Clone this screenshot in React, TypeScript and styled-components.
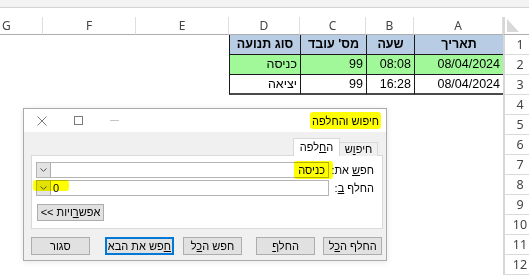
import React from 'react';
import styled, { createGlobalStyle } from 'styled-components';

const GlobalStyle = createGlobalStyle`
  html, body {
    margin: 0;
    padding: 0;
    background: #fff;
  }
  body {
    font-family: "Liberation Sans", Arial, sans-serif;
    overflow: hidden;
  }
`;

const Screen = styled.div`
  position: relative;
  width: 529px;
  height: 275px;
  overflow: hidden;
  background: #fff;
`;

const TopBand = styled.div`
  height: 7px;
  background: #f3f3f3;
  border-bottom: 1px solid #d4d4d4;
  margin-bottom: 9px;
`;

const Sheet = styled.div`
  display: grid;
  grid-template-columns: 43px 93px 93px 71px 66px 48px 89px 26px;
  grid-template-rows: 18px repeat(12, 20px);
`;

const ColHead = styled.div<{ $edge?: boolean }>`
  box-sizing: border-box;
  display: flex;
  align-items: center;
  justify-content: ${(p) => (p.$edge ? 'flex-start' : 'center')};
  padding-left: ${(p) => (p.$edge ? '2px' : '0')};
  border-right: 1px solid #dedede;
  border-bottom: 1px solid #acacac;
  color: #444;
  font-family: "Noto Sans", "Liberation Sans", sans-serif;
  font-size: 12px;
`;

const Corner = styled.div`
  box-sizing: border-box;
  position: relative;
  border-left: 2px solid #d6d6d6;
  border-bottom: 1px solid #acacac;

  &::after {
    content: '';
    position: absolute;
    left: 2px;
    top: 2px;
    width: 0;
    height: 0;
    border-bottom: 13px solid #d9d9d9;
    border-right: 12px solid transparent;
  }
`;

const RowNum = styled.div`
  box-sizing: border-box;
  display: flex;
  align-items: center;
  justify-content: center;
  padding-left: 6px;
  border-left: 2px solid #d6d6d6;
  border-bottom: 1px solid #dadada;
  color: #444;
  font-family: "Noto Sans", "Liberation Sans", sans-serif;
  font-size: 12.5px;
`;

const Blank = styled.div``;

const Cell = styled.div<{ $fill: string; $head?: boolean; $last?: boolean }>`
  box-sizing: border-box;
  padding-right: ${(p) => (p.$head ? '0' : '3px')};
  line-height: ${(p) => (p.$last ? '18px' : '19px')};
  text-align: ${(p) => (p.$head ? 'center' : 'right')};
  background: ${(p) => p.$fill};
  border-left: 1px solid #1a1a1a;
  border-bottom: ${(p) => (p.$last ? '2px solid #4a4a4a' : '1px solid #1a1a1a')};
  font-size: 12.5px;
  font-weight: ${(p) => (p.$head ? 700 : 400)};
  color: #000;
  direction: rtl;
  white-space: nowrap;
`;

const Dialog = styled.div`
  position: absolute;
  left: 23px;
  top: 108px;
  width: 364px;
  height: 153px;
  box-sizing: border-box;
  border: 1px solid #aaaaaa;
  background: #f0f0f0;
  display: flex;
  flex-direction: column;
  direction: rtl;
  font-family: "Liberation Sans", Arial, sans-serif;
  font-size: 11px;
  color: #000;
  box-shadow: 0 1px 6px rgba(0, 0, 0, 0.1);
`;

const TitleBar = styled.div`
  height: 23px;
  background: #fff;
  display: flex;
  align-items: center;
  justify-content: space-between;
  padding-right: 7px;
`;

const Controls = styled.div`
  display: flex;
  direction: ltr;
  height: 100%;
`;

const ControlBtn = styled.div`
  width: 36px;
  display: flex;
  align-items: center;
  justify-content: center;
`;

const Mark = styled.span<{ $inset: string }>`
  position: relative;

  &::before {
    content: '';
    position: absolute;
    inset: ${(p) => p.$inset};
    background: #ffff00;
    mix-blend-mode: multiply;
    border-radius: 3px;
    pointer-events: none;
  }
`;

const Body = styled.div`
  flex: 1;
  display: flex;
  flex-direction: column;
  padding: 6px 3px 5px 7px;
`;

const TabRow = styled.div`
  display: flex;
  align-items: flex-end;
  height: 18px;
  padding-right: 5px;
  margin-bottom: -1px;
  position: relative;
  z-index: 1;
`;

const Tab = styled.div<{ $active?: boolean; $w: number }>`
  box-sizing: border-box;
  width: ${(p) => p.$w}px;
  height: ${(p) => (p.$active ? '18px' : '14px')};
  line-height: ${(p) => (p.$active ? '17px' : '13px')};
  text-align: center;
  background: ${(p) => (p.$active ? '#fff' : '#f0f0f0')};
  border: 1px solid #d9d9d9;
  border-bottom: none;
  ${(p) => (p.$active ? '' : 'border-left: none;')}
`;

const Panel = styled.div`
  box-sizing: border-box;
  height: 74px;
  background: #fff;
  border: 1px solid #d9d9d9;
  padding: 6px 0 0 4px;
  display: flex;
  flex-direction: column;
`;

const FieldRow = styled.div<{ $space?: number }>`
  display: grid;
  grid-template-columns: 53px 1fr;
  align-items: center;
  margin-top: ${(p) => p.$space ?? 0}px;
`;

const Label = styled.div`
  padding-right: 8px;
  white-space: nowrap;
`;

const Input = styled.div`
  box-sizing: border-box;
  height: 16px;
  border: 1px solid #b4b4b4;
  background: #fff;
  display: flex;
  direction: ltr;
`;

const Dropdown = styled.div`
  width: 14px;
  height: 100%;
  box-sizing: border-box;
  background: #e3e3e3;
  border-right: 1px solid #adadad;
  display: flex;
  align-items: center;
  justify-content: center;
`;

const Value = styled.div`
  flex: 1;
  display: flex;
  align-items: center;
  justify-content: flex-end;
  padding: 0 3px;
`;

const Combo = styled.span`
  display: inline-flex;
  align-items: center;
  height: 100%;
`;

const OptionsRow = styled.div`
  display: flex;
  justify-content: flex-end;
  margin-top: 8px;
  padding-left: 1px;
`;

const ButtonRow = styled.div`
  display: flex;
  margin-top: 8px;
  padding-right: 1px;
`;

const Button = styled.div<{ $w: number; $gap?: number; $default?: boolean }>`
  box-sizing: border-box;
  width: ${(p) => p.$w}px;
  height: 18px;
  line-height: 16px;
  margin-left: ${(p) => p.$gap ?? 0}px;
  text-align: center;
  background: #e1e1e1;
  border: 1px solid ${(p) => (p.$default ? '#0078d7' : '#adadad')};
  box-shadow: ${(p) => (p.$default ? 'inset 0 0 0 1px #0078d7' : 'none')};
  white-space: nowrap;
`;

const SmallButton = styled(Button)`
  height: 17px;
  line-height: 15px;
`;

const Chevron = () => (
  <svg width="7" height="4" viewBox="0 0 7 4">
    <path d="M0.5 0.5 L3.5 3.3 L6.5 0.5" fill="none" stroke="#555" strokeWidth="1" />
  </svg>
);

type Row = { fill: string; head?: boolean; last?: boolean; cells: string[] };

// D, C, B, A
const tableRows: Row[] = [
  { fill: '#b8cce4', head: true, cells: ['סוג תנועה', "מס' עובד", 'שעה', 'תאריך'] },
  { fill: '#a0f898', cells: ['כניסה', '99', '08:08', '08/04/2024'] },
  { fill: '#ffffff', last: true, cells: ['יציאה', '99', '16:28', '08/04/2024'] },
];

const letters = ['G', 'F', 'E', 'D', 'C', 'B', 'A'];

const App: React.FC = () => (
  <Screen>
    <GlobalStyle />
    <TopBand />
    <Sheet>
      {letters.map((l, i) => (
        <ColHead key={l} $edge={i === 0}>
          {l}
        </ColHead>
      ))}
      <Corner />
      {Array.from({ length: 12 }, (_, r) => {
        const row = tableRows[r];
        return (
          <React.Fragment key={r}>
            <Blank />
            <Blank />
            <Blank />
            {row
              ? row.cells.map((c, k) => (
                  <Cell key={k} $fill={row.fill} $head={row.head} $last={row.last}>
                    {c}
                  </Cell>
                ))
              : [0, 1, 2, 3].map((k) => <Blank key={k} />)}
            <RowNum>{r + 1}</RowNum>
          </React.Fragment>
        );
      })}
    </Sheet>

    <Dialog>
      <TitleBar>
        <Mark $inset="-3px -2px -2px -2px">חיפוש והחלפה</Mark>
        <Controls>
          <ControlBtn>
            <svg width="10" height="10" viewBox="0 0 10 10">
              <path d="M0.5 0.5 L9.5 9.5 M9.5 0.5 L0.5 9.5" stroke="#7a7a7a" strokeWidth="1" />
            </svg>
          </ControlBtn>
          <ControlBtn>
            <svg width="9" height="9" viewBox="0 0 9 9">
              <rect x="0.5" y="0.5" width="8" height="8" fill="none" stroke="#7a7a7a" strokeWidth="1" />
            </svg>
          </ControlBtn>
          <ControlBtn>
            <svg width="9" height="9" viewBox="0 0 9 9">
              <path d="M0 4.5 H9" stroke="#c4c4c4" strokeWidth="1" />
            </svg>
          </ControlBtn>
        </Controls>
      </TitleBar>

      <Body>
        <TabRow>
          <Tab $w={38}>
            חיפ<u>ו</u>ש
          </Tab>
          <Tab $w={47} $active>
            ה<u>ח</u>לפה
          </Tab>
        </TabRow>
        <Panel>
          <FieldRow>
            <Label>
              חפ<u>ש</u> את:
            </Label>
            <Input>
              <Dropdown>
                <Chevron />
              </Dropdown>
              <Value>
                <Mark $inset="-3px -8px -3px -4px" dir="rtl">
                  כניסה
                </Mark>
              </Value>
            </Input>
          </FieldRow>
          <FieldRow $space={2}>
            <Label>
              החלף <u>ב</u>:
            </Label>
            <Input>
              <Mark as={Combo} $inset="-1px -10px 4px -4px">
                <Dropdown>
                  <Chevron />
                </Dropdown>
                <span style={{ paddingLeft: 2 }}>0</span>
              </Mark>
            </Input>
          </FieldRow>
          <OptionsRow>
            <SmallButton $w={67}>
              אפש<u>ר</u>ויות &gt;&gt;
            </SmallButton>
          </OptionsRow>
        </Panel>

        <ButtonRow>
          <Button $w={59} $gap={8}>
            החלף ה<u>כ</u>ל
          </Button>
          <Button $w={60} $gap={14}>
            החל<u>ף</u>
          </Button>
          <Button $w={59} $gap={9}>
            חפש ה<u>כ</u>ל
          </Button>
          <Button $w={70} $gap={15} $default>
            <u>ח</u>פש את הבא
          </Button>
          <Button $w={59}>סגור</Button>
        </ButtonRow>
      </Body>
    </Dialog>
  </Screen>
);

export default App;
